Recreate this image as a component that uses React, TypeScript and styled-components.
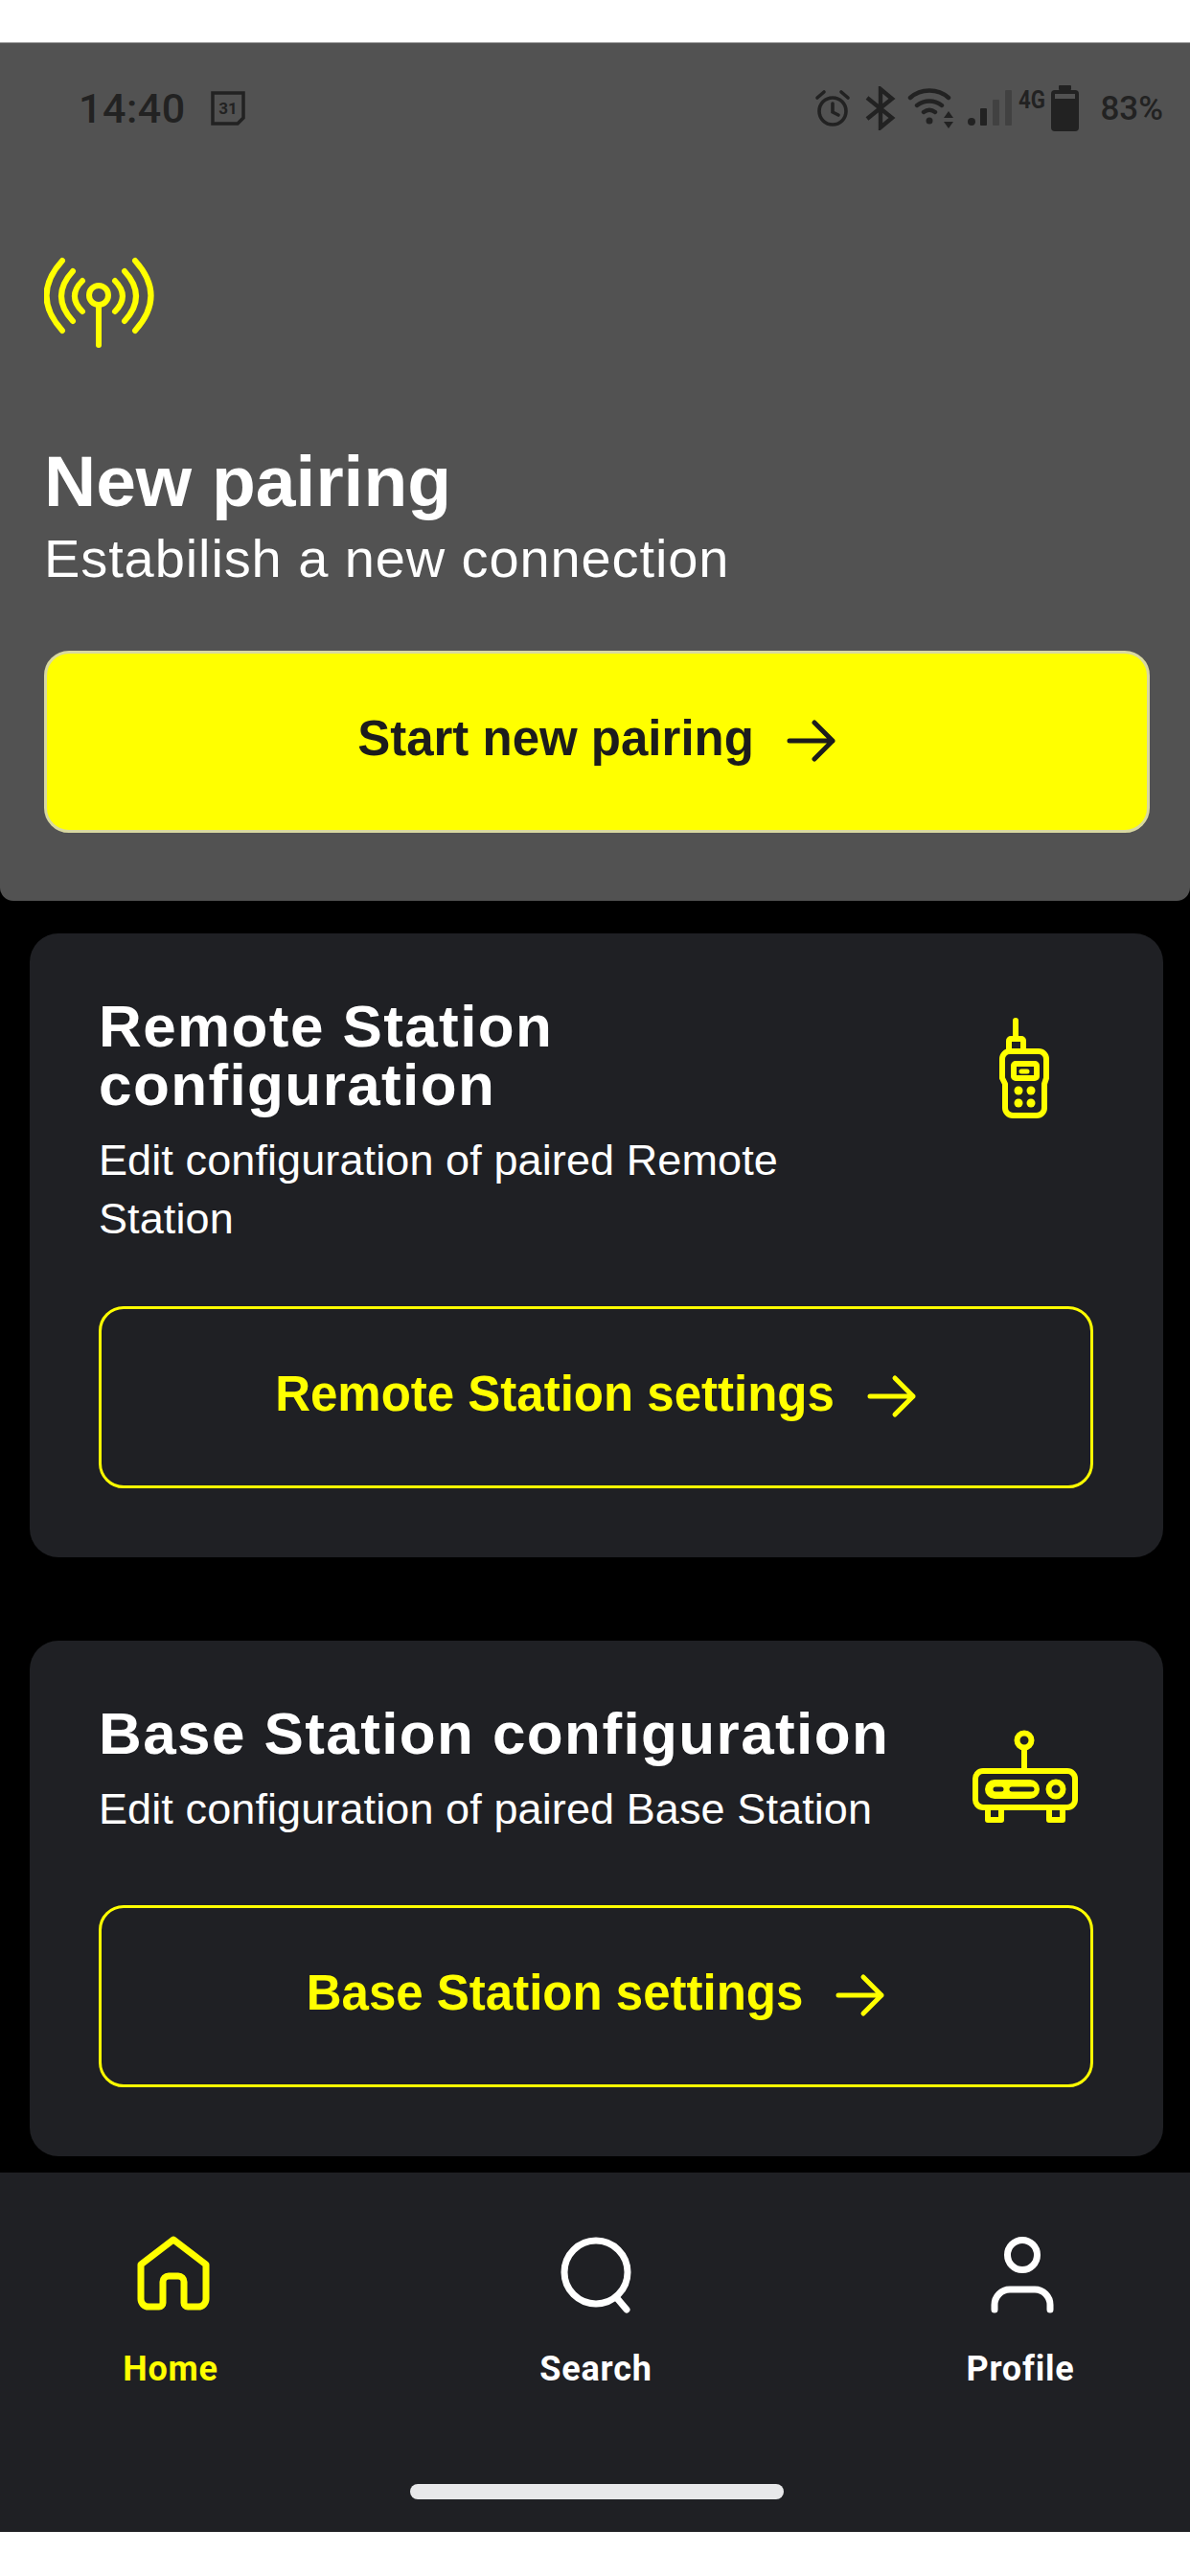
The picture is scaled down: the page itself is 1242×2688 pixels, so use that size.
import styled, { createGlobalStyle } from 'styled-components'

const YELLOW = '#ffff00'
const PANEL = '#1f2024'

const Global = createGlobalStyle`
  html, body {
    margin: 0;
    padding: 0;
    background: #ffffff;
  }
  * {
    box-sizing: border-box;
  }
`

const Screen = styled.div`
  width: 1242px;
  height: 2688px;
  padding: 44px 0 46px;
  background: #ffffff;
  font-family: "Liberation Sans", Arial, sans-serif;
`

const Inner = styled.div`
  height: 2598px;
  display: flex;
  flex-direction: column;
  background: #000000;
`

const Hero = styled.header`
  height: 896px;
  padding: 0 42px 0 46px;
  flex-shrink: 0;
  background: #525252;
  border-radius: 0 0 14px 14px;
  border-top: 1px solid #9a9a9a;
`

const StatusBar = styled.div`
  height: 136px;
  padding: 0 0 0 36px;
  margin-right: -14px;
  display: flex;
  align-items: center;
  justify-content: space-between;
  color: #222222;
`

const StatusLeft = styled.div`
  display: flex;
  align-items: center;
  gap: 25px;
`

const StatusTime = styled.span`
  font-family: Roboto, sans-serif;
  font-size: 43px;
  font-weight: 500;
  letter-spacing: 0.5px;
`

const StatusRight = styled.div`
  display: flex;
  align-items: center;
`

const StatusGlyph = styled.svg<{ $left?: number }>`
  display: block;
  margin-left: ${({ $left }) => $left ?? 0}px;
`

const Percent = styled.span`
  margin-left: 21px;
  font-family: Roboto, sans-serif;
  font-size: 35px;
  font-weight: 500;
`

const HeroIcon = styled.svg`
  display: block;
  width: 118px;
  height: 96px;
  margin-top: 87px;
`

const HeroTitle = styled.h1`
  margin: 96px 0 0;
  font-size: 75px;
  line-height: 84px;
  font-weight: 700;
  color: #ffffff;
`

const HeroSubtitle = styled.p`
  margin: 6px 0 0;
  font-size: 56px;
  line-height: 66px;
  font-weight: 400;
  letter-spacing: 0.9px;
  color: #ffffff;
`

const ActionButton = styled.button<{ $primary?: boolean }>`
  width: 100%;
  height: 190px;
  padding: 0 0 2px;
  display: flex;
  align-items: center;
  justify-content: center;
  gap: 34px;
  border-radius: 26px;
  border: 3px solid ${({ $primary }) => ($primary ? '#d9d9a0' : YELLOW)};
  background: ${({ $primary }) => ($primary ? YELLOW : 'transparent')};
  color: ${({ $primary }) => ($primary ? '#1c1c1c' : YELLOW)};
  font-family: inherit;
  font-size: 51px;
  font-weight: 700;
`

const ButtonLabel = styled.span`
  margin-bottom: 6px;
`

const HeroAction = styled.div`
  margin-top: 63px;
`

const Card = styled.section<{ $top: number }>`
  margin: ${({ $top }) => $top}px 28px 0 31px;
  padding: 66px 73px 72px 72px;
  flex-shrink: 0;
  background: ${PANEL};
  border-radius: 30px;
`

const CardHead = styled.div`
  display: flex;
  justify-content: space-between;
  align-items: flex-start;
`

const CardCopy = styled.div<{ $wide?: boolean }>`
  width: ${({ $wide }) => ($wide ? '860px' : '760px')};
`

const CardTitle = styled.h2`
  margin: 0;
  font-size: 62px;
  line-height: 61px;
  font-weight: 700;
  letter-spacing: 1.4px;
  color: #ffffff;
`

const CardText = styled.p`
  margin: 18px 0 0;
  font-size: 45px;
  line-height: 61px;
  font-weight: 400;
  letter-spacing: 0.1px;
  color: #ffffff;
`

const CardIcon = styled.svg<{ $width: number; $height: number; $right: number; $top: number }>`
  flex-shrink: 0;
  width: ${({ $width }) => $width}px;
  height: ${({ $height }) => $height}px;
  margin: ${({ $top }) => $top}px ${({ $right }) => $right}px 0 0;
`

const CardAction = styled.div<{ $gap: number }>`
  margin-top: ${({ $gap }) => $gap}px;
`

const BottomNav = styled.nav`
  position: relative;
  margin-top: auto;
  height: 375px;
  flex-shrink: 0;
  background: ${PANEL};
`

const NavRow = styled.div`
  display: grid;
  grid-template-columns: 356px 532px 354px;
  padding: 64px 0 0 0;
`

const NavItem = styled.div<{ $active?: boolean }>`
  display: flex;
  flex-direction: column;
  align-items: center;
  gap: 36px;
  color: ${({ $active }) => ($active ? YELLOW : '#ffffff')};
`

const NavIcon = styled.svg`
  width: 84px;
  height: 84px;
`

const NavLabel = styled.span`
  font-family: Roboto, sans-serif;
  font-size: 36px;
  line-height: 42px;
  font-weight: 700;
  letter-spacing: 0.8px;
`

const HomeBar = styled.div`
  position: absolute;
  left: 428px;
  bottom: 34px;
  width: 390px;
  height: 16px;
  border-radius: 8px;
  background: #e8e8ea;
`

function Arrow() {
  return (
    <svg width="52" height="48" viewBox="0 0 52 48" fill="none" stroke="currentColor" strokeWidth="5" strokeLinecap="round" strokeLinejoin="round">
      <path d="M3 24h45M29 5l19 19-19 19" />
    </svg>
  )
}

function StatusIcons() {
  return (
    <StatusRight>
      {/* alarm */}
      <StatusGlyph width="38" height="40" viewBox="0 0 38 40" fill="none" stroke="#222" strokeWidth="3.6" strokeLinecap="round">
        <circle cx="19" cy="23" r="14" />
        <path d="M19 15v9l6 3M3 9l7-6M35 9l-7-6" />
      </StatusGlyph>
      {/* bluetooth */}
      <StatusGlyph $left={14} width="34" height="46" viewBox="0 0 34 46" fill="none" stroke="#222" strokeWidth="4.4" strokeLinejoin="miter">
        <path d="M3 12l26 21-12 10V3l12 10L3 34" />
      </StatusGlyph>
      {/* wifi with data arrows */}
      <StatusGlyph $left={11} width="52" height="44" viewBox="0 0 52 44" fill="none" stroke="#222" strokeWidth="4.4" strokeLinecap="round">
        <path d="M3 11c11-10 29-10 40 0M10 19c8-6 18-6 26 0M17 26c4-3 8-3 12 0" />
        <circle cx="23" cy="35" r="3.5" fill="#222" stroke="none" />
        <path d="M43 25l-5 7h10zM43 43l-5-7h10z" fill="#222" stroke="none" />
      </StatusGlyph>
      {/* signal bars */}
      <StatusGlyph $left={10} width="48" height="40" viewBox="0 0 48 40" fill="#222">
        <circle cx="5" cy="34" r="4" />
        <rect x="14" y="20" width="7" height="18" rx="1" />
        <rect x="27" y="11" width="7" height="27" rx="1" opacity="0.35" />
        <rect x="40" y="1" width="7" height="37" rx="1" opacity="0.35" />
      </StatusGlyph>
      {/* network type and battery */}
      <StatusGlyph $left={6} width="64" height="50" viewBox="0 0 64 50">
        <text x="0" y="25" fontFamily="Roboto, sans-serif" fontSize="25" fontWeight="700" fill="#222" textLength={28} lengthAdjust="spacingAndGlyphs">4G</text>
        <rect x="34" y="6" width="29" height="43" rx="4" fill="#222" />
        <rect x="42" y="1" width="13" height="5" rx="1" fill="#222" />
        <rect x="38" y="10" width="21" height="5" fill="#525252" />
      </StatusGlyph>
      <Percent>83%</Percent>
    </StatusRight>
  )
}

export default function App() {
  return (
    <Screen>
      <Global />
      <Inner>
        <Hero>
          <StatusBar>
            <StatusLeft>
              <StatusTime>14:40</StatusTime>
              <svg width="38" height="38" viewBox="0 0 38 38" fill="none" stroke="#222" strokeWidth="3.5">
                <path d="M3 3h32v26l-6 6H3z" />
                <text x="19" y="25" textAnchor="middle" fontFamily="Roboto, sans-serif" fontSize="17" fontWeight="700" fill="#222" stroke="none">31</text>
              </svg>
            </StatusLeft>
            <StatusIcons />
          </StatusBar>

          <HeroIcon viewBox="0 0 118 96" fill="none" stroke={YELLOW} strokeWidth="6" strokeLinecap="round">
            <circle cx="57" cy="40" r="10" />
            <path d="M57 52v40" />
            <path d="M40 25Q24 41 40 57M74 25Q90 41 74 57" />
            <path d="M30 15Q6 41 30 67M84 15Q108 41 84 67" />
            <path d="M19 4Q-14 40.500 19 77M95 4Q128 40.500 95 77" />
          </HeroIcon>

          <HeroTitle>New pairing</HeroTitle>
          <HeroSubtitle>Estabilish a new connection</HeroSubtitle>

          <HeroAction>
            <ActionButton $primary>
              <ButtonLabel>Start new pairing</ButtonLabel>
              <Arrow />
            </ActionButton>
          </HeroAction>
        </Hero>

        <Card $top={34}>
          <CardHead>
            <CardCopy>
              <CardTitle>Remote Station configuration</CardTitle>
              <CardText>Edit configuration of paired Remote Station</CardText>
            </CardCopy>
            <CardIcon $width={56} $height={108} $right={44} $top={20} viewBox="0 0 56 108" fill="none" stroke={YELLOW} strokeWidth="6" strokeLinecap="round" strokeLinejoin="round">
              <path d="M19 5v19" />
              <rect x="12" y="24" width="15" height="13" rx="2" />
              <path d="M13 37h30a8 8 0 0 1 8 8v20l-2 6v25a8 8 0 0 1-8 8H16a8 8 0 0 1-8-8V71l-3-6V45a8 8 0 0 1 8-8z" />
              <rect x="17" y="50" width="24" height="15" rx="2" />
              <path d="M25 58h6" strokeWidth="5" />
              <g fill={YELLOW} stroke="none">
                <circle cx="22" cy="78" r="4.500" />
                <circle cx="35" cy="78" r="4.500" />
                <circle cx="22" cy="91" r="4.500" />
                <circle cx="35" cy="91" r="4.500" />
              </g>
            </CardIcon>
          </CardHead>
          <CardAction $gap={61}>
            <ActionButton>
              <ButtonLabel>Remote Station settings</ButtonLabel>
              <Arrow />
            </ActionButton>
          </CardAction>
        </Card>

        <Card $top={87}>
          <CardHead>
            <CardCopy $wide>
              <CardTitle>Base Station configuration</CardTitle>
              <CardText>Edit configuration of paired Base Station</CardText>
            </CardCopy>
            <CardIcon $width={110} $height={98} $right={16} $top={26} viewBox="0 0 110 98" fill="none" stroke={YELLOW} strokeWidth="6" strokeLinecap="round" strokeLinejoin="round">
              <circle cx="54" cy="12" r="7.500" />
              <path d="M54 20v24" />
              <rect x="3" y="44" width="104" height="38" rx="8" />
              <rect x="13" y="53" width="57" height="20" rx="10" fill={YELLOW} stroke="none" />
              <path d="M24 63h6M41 63h21" stroke={PANEL} strokeWidth="5" />
              <circle cx="87" cy="63" r="7.500" />
              <path d="M16 82v13h14V82M80 82v13h14V82" />
            </CardIcon>
          </CardHead>
          <CardAction $gap={70}>
            <ActionButton>
              <ButtonLabel>Base Station settings</ButtonLabel>
              <Arrow />
            </ActionButton>
          </CardAction>
        </Card>

        <BottomNav>
          <NavRow>
            <NavItem $active>
              <NavIcon viewBox="0 0 84 84" fill="none" stroke="currentColor" strokeWidth="7" strokeLinecap="round" strokeLinejoin="round">
                <path d="M45 6L11 32v36a8 8 0 0 0 8 8h11a4 4 0 0 0 4-4V50a6 6 0 0 1 6-6h10a6 6 0 0 1 6 6v22a4 4 0 0 0 4 4h11a8 8 0 0 0 8-8V32z" />
              </NavIcon>
              <NavLabel>Home</NavLabel>
            </NavItem>
            <NavItem>
              <NavIcon viewBox="0 0 84 84" fill="none" stroke="currentColor" strokeWidth="7" strokeLinecap="round">
                <circle cx="42" cy="40" r="33" />
                <path d="M63 66l11 13" />
              </NavIcon>
              <NavLabel>Search</NavLabel>
            </NavItem>
            <NavItem>
              <NavIcon viewBox="0 0 84 84" fill="none" stroke="currentColor" strokeWidth="7" strokeLinecap="round">
                <circle cx="44" cy="22" r="15.500" />
                <path d="M15 79v-5a16 16 0 0 1 16-16h26a16 16 0 0 1 16 16v5" />
              </NavIcon>
              <NavLabel>Profile</NavLabel>
            </NavItem>
          </NavRow>
          <HomeBar />
        </BottomNav>
      </Inner>
    </Screen>
  )
}
